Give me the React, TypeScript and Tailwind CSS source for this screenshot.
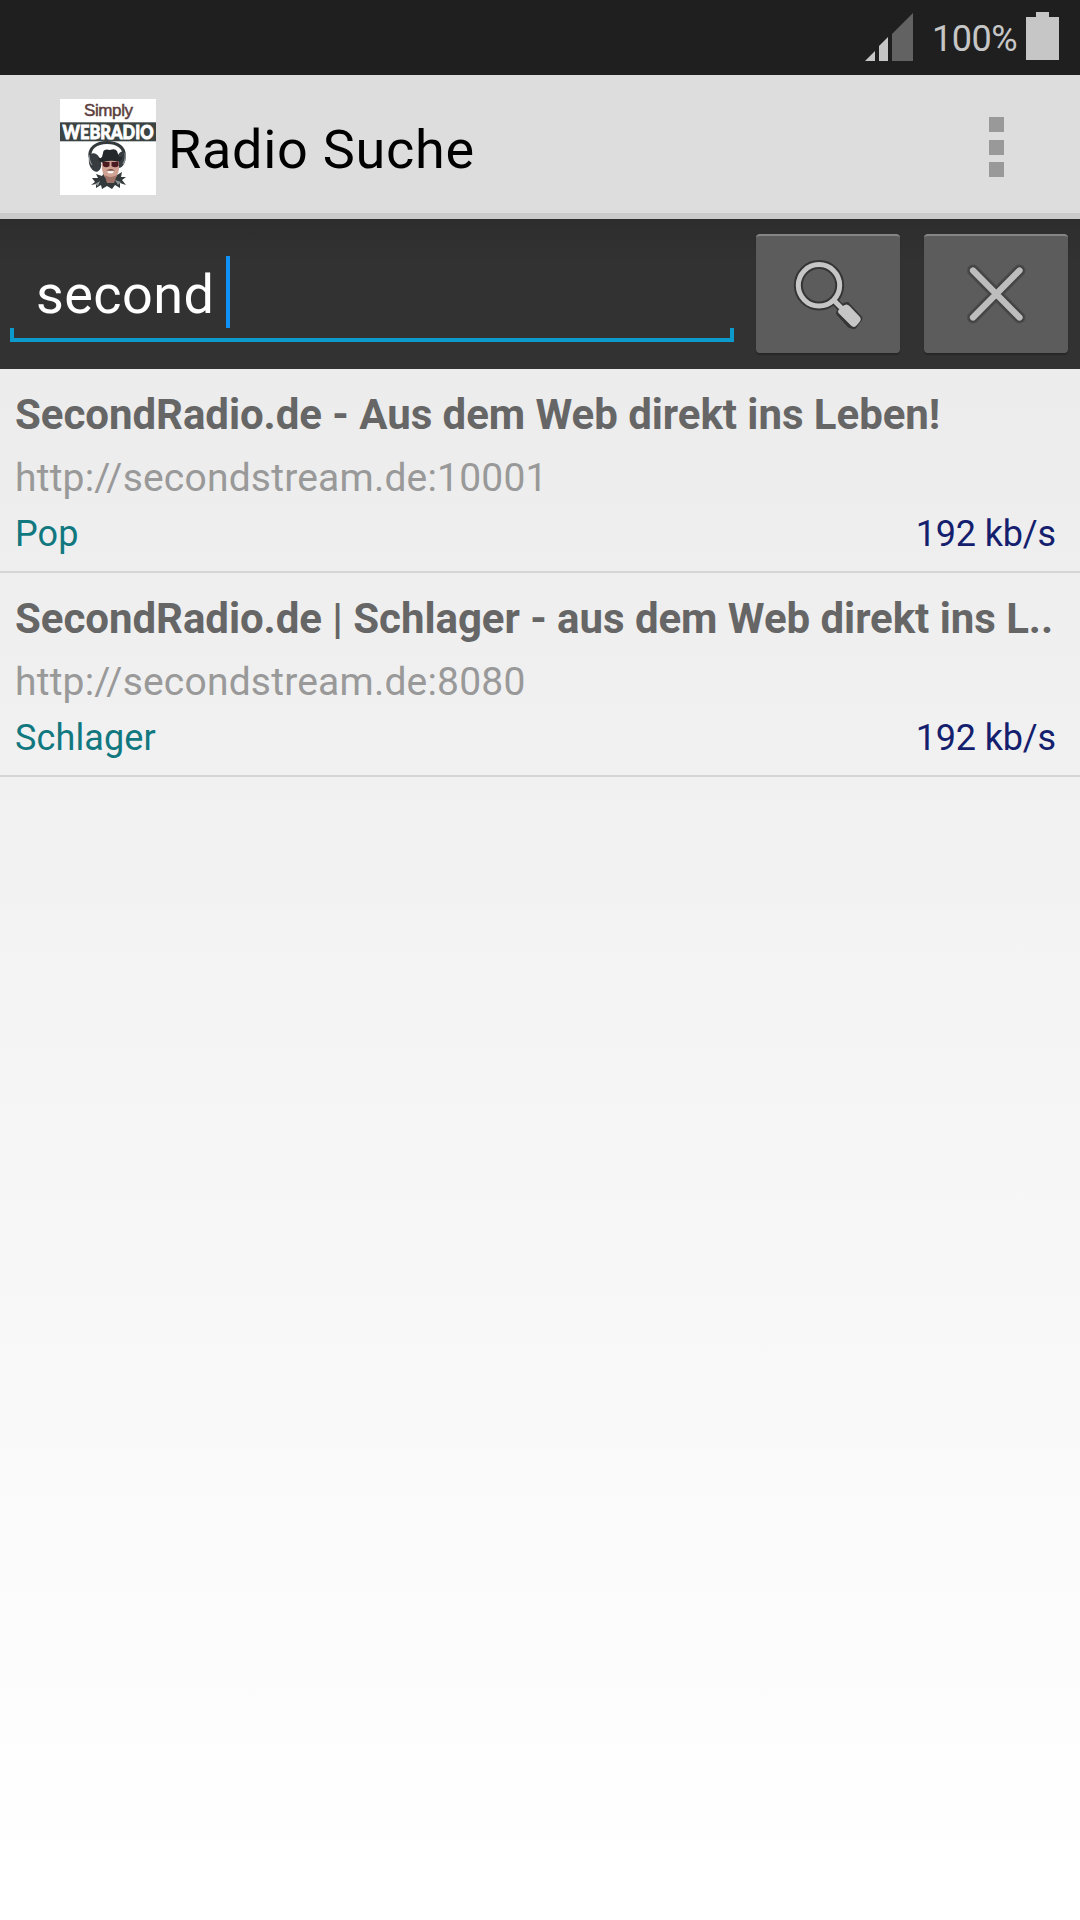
type Station = {
    name: string
    url: string
    genre: string
    bitrate: string
}

const stations: Station[] = [
    {
        name: "SecondRadio.de - Aus dem Web direkt ins Leben!",
        url: "http://secondstream.de:10001",
        genre: "Pop",
        bitrate: "192 kb/s",
    },
    {
        name: "SecondRadio.de | Schlager - aus dem Web direkt ins L..",
        url: "http://secondstream.de:8080",
        genre: "Schlager",
        bitrate: "192 kb/s",
    },
]

function StatusBar() {
    return (
        <div className="flex h-[75px] shrink-0 items-start justify-end bg-[#1f1f1f] pr-[21px]">
            <svg className="mt-3 h-[50px] w-[49px]" viewBox="0 0 49 50">
                <path d="M1 49 L11 39 V49 Z" fill="#c6c6c6" />
                <path d="M15 49 V34 L24 25 V49 Z" fill="#c6c6c6" />
                <path d="M28 49 V22 L49 1 V49 Z" fill="#626262" />
            </svg>
            <span className="mt-[18px] w-[113px] pl-[19px] text-[36px] leading-[42px] tracking-[-0.5px] text-[#c6c6c6]">100%</span>
            <svg className="mt-3 h-12 w-[33px]" viewBox="0 0 33 48">
                <path d="M10 0 H23 V5 H33 V48 H0 V5 H10 Z" fill="#c6c6c6" />
            </svg>
        </div>
    )
}

function AppLogo() {
    return (
        <svg className="h-24 w-24 shrink-0 overflow-visible" viewBox="0 0 96 96">
            <rect width="96" height="96" fill="#fff" />
            <rect y="23.3" width="96" height="19" fill="#3b4443" />
            <text x="24" y="17.3" fontSize="17" textLength="49" fill="#5c403d" stroke="#5c403d" strokeWidth="0.5" fontFamily="Liberation Sans, sans-serif">Simply</text>
            <text x="2.5" y="40" fontSize="19.5" fontWeight="900" textLength="91" lengthAdjust="spacingAndGlyphs" fill="#fff" stroke="#fff" strokeWidth="0.9" fontFamily="Lato, sans-serif">WEBRADIO</text>
            {/* headphones */}
            <path d="M30 58 C29 49 36 43.500 47 43.500 C58 43.500 65 49 64 57" fill="none" stroke="#343a3c" strokeWidth="3.2" />
            <ellipse cx="35" cy="63.500" rx="6" ry="9.500" transform="rotate(-14 35 63.500)" fill="#363c3f" />
            <ellipse cx="61" cy="60.500" rx="4.500" ry="8.500" transform="rotate(16 61 60.500)" fill="#363c3f" />
            <path d="M29 56 Q29 62 32 66 M65 54 Q66 60 63 65" fill="none" stroke="#8d9496" strokeWidth="1.2" />
            {/* jacket */}
            <path d="M31 86 L35 83 L32 79 L38 79 L36 75 L42 77 L44 74 L55 74 L57 76 L62 73 L61 78 L66 78 L62 81 L66 86 L60 84 L60 89 L55 86 L52 90 L47 87 L42 90 L41 86 L36 89 L36 85 Z" fill="#33393b" />
            <path d="M35 85 L40 82 L38 87 Z M58 86 L55 81 L61 83 Z" fill="#8f9698" />
            {/* face */}
            <path d="M42 61 H59 V70 Q58 80 50.500 81 Q43 80 42 70 Z" fill="#d0a294" />
            <path d="M44.500 76 Q50 80 57 76 L54 84 H47 Z" fill="#a07468" />
            <path d="M42.500 63 H49.500 V67 Q46 69.500 43 67 Z M51.500 63 H58.500 V67 Q55 69.500 51.500 67 Z" fill="#4a1c22" />
            <path d="M46 71.500 Q51 68.500 55 71.500 Z" fill="#6b4238" />
            <path d="M47 72.300 H54 L52.500 74.300 H48.500 Z" fill="#fff" />
            {/* hat */}
            <path d="M42 58 L43.500 52 Q45 49.500 50 51 Q55 49 57 52 L59 58 Q62 58.500 62.500 57 Q62 62 58 62.800 Q50 60.500 42 63.500 Q38 62 38.500 59 Q40 60 42 58 Z" fill="#24282b" />
        </svg>
    )
}

function ActionBar() {
    return (
        <header className="flex h-36 shrink-0 items-start border-b-[6px] border-[#cbcbcb] bg-[#dddddd] pl-[60px]">
            <div className="mt-6">
                <AppLogo />
            </div>
            <h1 className="mt-[43px] ml-3 text-[54px] leading-[63px] tracking-[0.72px] text-black">Radio Suche</h1>
            <div className="mt-[42px] mr-[76px] ml-auto flex flex-col gap-[7.5px]">
                <span className="h-[15px] w-[15px] bg-[#999999]" />
                <span className="h-[15px] w-[15px] bg-[#999999]" />
                <span className="h-[15px] w-[15px] bg-[#999999]" />
            </div>
        </header>
    )
}

function SearchIcon() {
    return (
        <svg className="h-[119px] w-36" viewBox="0 0 144 119" fill="none">
            <g stroke="#353535" strokeLinecap="round">
                <circle cx="63" cy="51.300" r="20.700" strokeWidth="9" />
                <path d="M78 66.500 L85 74" strokeWidth="8" />
                <path d="M87 72.500 L91 71 L103.500 84.500 L98 92 L94 91 L83 79 Z" strokeWidth="6" strokeLinejoin="round" />
            </g>
            <circle cx="63" cy="51.300" r="20.700" stroke="#c6c6c6" strokeWidth="5" />
            <path d="M77.500 66 L87 75.500" stroke="#c6c6c6" strokeWidth="5" />
            <path d="M87 72 Q90.500 69 93.500 72 L103.500 82.500 Q106 85 103.500 88 L101 91 Q98 94.500 95 91.500 L82.500 79 Q81 76.500 84 75 Z" fill="#c6c6c6" />
        </svg>
    )
}

function ClearIcon() {
    return (
        <svg className="h-[119px] w-36" viewBox="0 0 144 119" fill="none" strokeLinecap="round">
            <path d="M49 36.500 L95.500 83.500 M95.500 36.500 L49 83.500" stroke="#4b4b4b" strokeWidth="12" />
            <path d="M49 36.500 L95.500 83.500 M95.500 36.500 L49 83.500" stroke="#424242" strokeWidth="9.500" />
            <path d="M49 36.500 L95.500 83.500 M95.500 36.500 L49 83.500" stroke="#bdbdbd" strokeWidth="6.300" />
        </svg>
    )
}

function SearchBar() {
    return (
        <div className="flex h-[150px] shrink-0 items-start bg-linear-to-b from-[#2d2d2d] to-[#323232] to-30% pl-2.5">
            <div className="mt-[37px] flex h-[86px] w-[724px] flex-col">
                <div className="flex h-[72px] items-start pl-[26px]">
                    <span className="mt-[7px] w-[190px] text-[54px] leading-[63px] tracking-[0.4px] text-white">second</span>
                    <span className="h-[72px] w-1 bg-[#0f92f5]" />
                </div>
                <div className="h-3.5 border-x-4 border-b-4 border-[#0c99cc]" />
            </div>
            <button className="mt-[15px] ml-[22px] h-[119px] w-36 rounded-[4px] border-t-2 border-[#858585] bg-[#5c5c5c] shadow-[0_2px_1px_#272727]">
                <div className="-mt-0.5">
                    <SearchIcon />
                </div>
            </button>
            <button className="mt-[15px] ml-6 h-[119px] w-36 rounded-[4px] border-t-2 border-[#858585] bg-[#5c5c5c] shadow-[0_2px_1px_#272727]">
                <div className="-mt-0.5">
                    <ClearIcon />
                </div>
            </button>
        </div>
    )
}

function StationRow({ station }: { station: Station }) {
    return (
        <div className="h-[204px] border-b-2 border-[#d5d5d5] pt-[21px] pr-6 pl-[15px] whitespace-nowrap">
            <h2 className="text-[42px] leading-[50px] font-bold tracking-[-0.05px] text-[#666666]">{station.name}</h2>
            <p className="mt-[15px] text-[39px] leading-[46px] tracking-[0.2px] text-[#999999]">{station.url}</p>
            <div className="mt-3 flex justify-between text-[36px] leading-[42px]">
                <span className="tracking-[0.12px] text-[#127880]">{station.genre}</span>
                <span className="tracking-[-0.15px] text-[#14206e]">{station.bitrate}</span>
            </div>
        </div>
    )
}

export default function App() {
    return (
        <div className="flex h-[1920px] w-[1080px] flex-col overflow-hidden font-[Roboto,sans-serif]">
            <StatusBar />
            <ActionBar />
            <SearchBar />
            <main className="flex-1 bg-linear-to-b from-[#ececec] to-white to-97%">
                {stations.map((station) => (
                    <StationRow key={station.url} station={station} />
                ))}
            </main>
        </div>
    )
}
